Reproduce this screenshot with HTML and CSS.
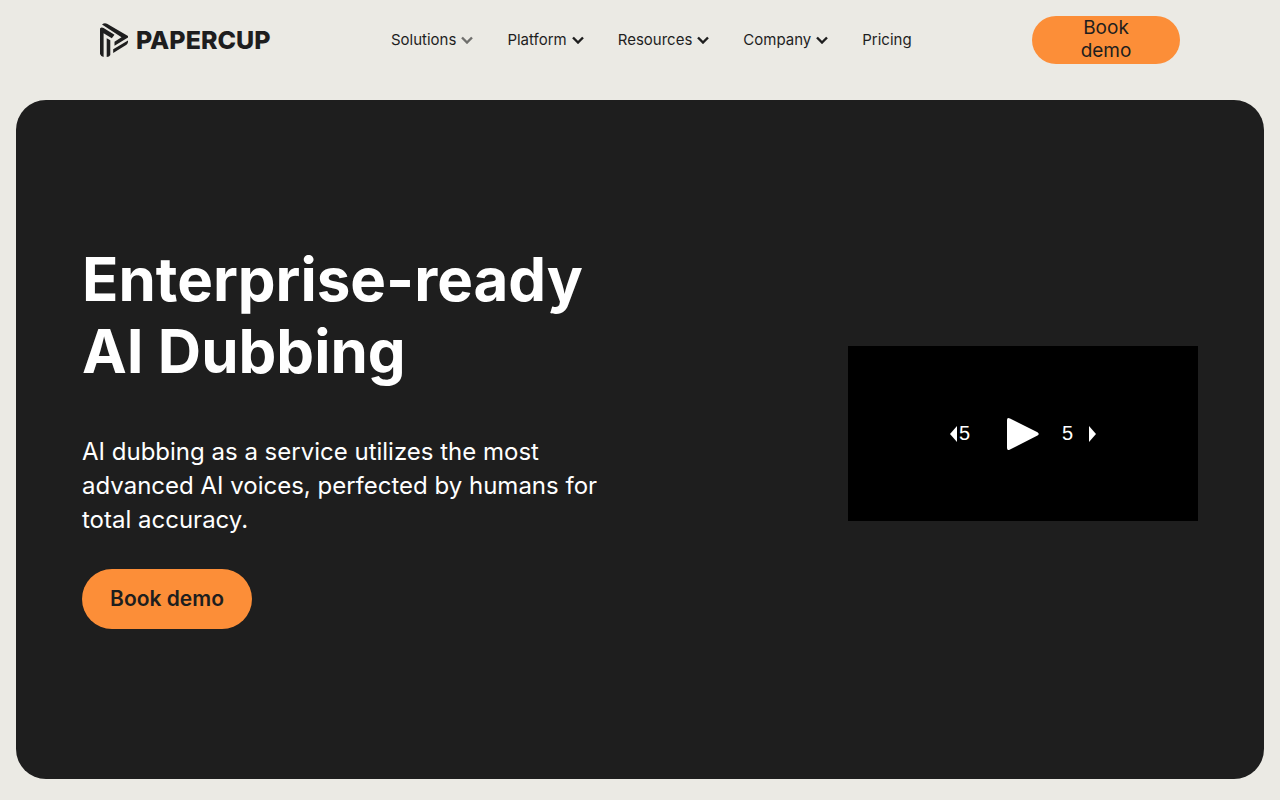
FILE: index.html
```
<!DOCTYPE html>
<html lang="en">
<head>
  <meta charset="UTF-8">
  <title>Papercup</title>
  <meta name="viewport" content="width=device-width, initial-scale=1.0">
  <link rel="stylesheet" href="styles.css">
</head>
<body>
  <header class="header">
    <a class="logo" href="#" aria-label="Papercup home">
      <svg class="logo-mark" viewBox="0 0 28 34" fill="currentColor">
        <path d="M2 1.500 Q4.500 -0.500 7 0.800 L28 13 V14.600 L14.500 22.800 V18.800 L21.500 14.200 Z" />
        <path d="M0 5.500 Q1.500 3.600 3.600 5 L14.500 11.800 L11.800 15.300 L3.600 10.300 V34 Q0.800 33.500 0 31 Z" />
        <path d="M6.700 15.200 L10.300 17.200 V32 Q9.500 33.800 6.700 34 Z" />
        <path d="M13.200 26.200 L28 17.600 Q28.300 20.400 26.500 21.800 L13.200 30 Z" />
      </svg>
      <span class="logo-text">PAPERCUP</span>
    </a>
    <nav class="nav">
      <a class="nav-link" href="#">Solutions
        <svg class="chevron chevron-open" viewBox="0 0 12 8"><path d="M1 1.5 L6 6.5 L11 1.5" /></svg>
      </a>
      <a class="nav-link" href="#">Platform
        <svg class="chevron" viewBox="0 0 12 8"><path d="M1 1.5 L6 6.5 L11 1.5" /></svg>
      </a>
      <a class="nav-link" href="#">Resources
        <svg class="chevron" viewBox="0 0 12 8"><path d="M1 1.5 L6 6.5 L11 1.5" /></svg>
      </a>
      <a class="nav-link" href="#">Company
        <svg class="chevron" viewBox="0 0 12 8"><path d="M1 1.5 L6 6.5 L11 1.5" /></svg>
      </a>
      <a class="nav-link" href="#">Pricing</a>
    </nav>
    <button class="btn btn-small" type="button">Book demo</button>
  </header>

  <main class="hero">
    <div class="hero-text">
      <h1>Enterprise-ready<br>AI Dubbing</h1>
      <p>AI dubbing as a service utilizes the most advanced AI voices, perfected by humans for total accuracy.</p>
      <button class="btn btn-large" type="button">Book demo</button>
    </div>
    <div class="player">
      <button class="skip" type="button" aria-label="Back 5 seconds">
        <svg class="arrow" viewBox="0 0 7 16"><path d="M7 0 V16 L0 8 Z" /></svg>
        <span>5</span>
      </button>
      <button class="play" type="button" aria-label="Play">
        <svg viewBox="0 0 32 32"><path d="M0 2 Q0 -1 3 0.5 L30.500 14.200 Q33 16 30.500 17.600 L3 31.500 Q0 33 0 30 Z" /></svg>
      </button>
      <button class="skip skip-forward" type="button" aria-label="Forward 5 seconds">
        <span>5</span>
        <svg class="arrow" viewBox="0 0 7 16"><path d="M0 0 V16 L7 8 Z" /></svg>
      </button>
    </div>
  </main>
</body>
</html>
```

FILE: styles.css
```
* {
  box-sizing: border-box;
}
body {
  margin: 0;
  background: #ebeae4;
  color: #1e1e1e;
  font-family: Inter, "Liberation Sans", sans-serif;
}
a {
  color: inherit;
  text-decoration: none;
}
button {
  border: none;
  padding: 0;
  font-family: inherit;
  cursor: pointer;
}

/* Header */
.header {
  display: flex;
  align-items: center;
  justify-content: space-between;
  padding: 16px 100px;
}
.logo {
  display: flex;
  align-items: center;
  gap: 8px;
}
.logo-mark {
  width: 28px;
  height: 34px;
}
.logo-text {
  font-size: 25px;
  line-height: 24px;
  font-weight: 800;
}
.nav {
  display: flex;
  gap: 34px;
}
.nav-link {
  display: flex;
  align-items: center;
  gap: 5px;
  font-size: 15px;
  line-height: 20px;
}
.chevron {
  width: 12px;
  height: 8px;
  fill: none;
  stroke: currentColor;
  stroke-width: 2.4;
}
.chevron-open {
  opacity: 0.6;
}
.btn {
  background: #fc8e38;
  color: #1e1e1e;
  border-radius: 30px;
}
.btn-small {
  width: 148px;
  height: 48px;
  padding: 0 40px 2px;
  font-size: 19px;
  line-height: 23px;
}
.btn-large {
  width: 170px;
  height: 60px;
  padding-bottom: 2px;
  font-size: 21px;
  font-weight: 600;
}

/* Hero */
.hero {
  display: flex;
  align-items: center;
  justify-content: space-between;
  min-height: calc(100vh - 121px);
  margin: 20px 16px 21px;
  padding: 0 66px 12px;
  border-radius: 30px;
  background: #1e1e1e;
  color: #fff;
}
.hero-text {
  max-width: 540px;
  padding-top: 5px;
}
.hero h1 {
  margin: 0 0 48px;
  font-size: 60px;
  line-height: 72px;
  font-weight: 700;
}
.hero p {
  margin: 0 0 32px;
  font-size: 24px;
  line-height: 34px;
}

/* Video player */
.player {
  display: flex;
  align-items: center;
  justify-content: center;
  gap: 21px;
  width: 350px;
  aspect-ratio: 2 / 1;
  background: #000;
}
.player button {
  background: none;
  color: #fff;
}
.player svg {
  display: block;
  fill: currentColor;
}
.skip {
  display: flex;
  align-items: center;
  gap: 2px;
  width: 36px;
  font-family: "Liberation Sans", sans-serif;
  font-size: 20px;
}
.skip-forward {
  justify-content: flex-end;
  gap: 16px;
}
.arrow {
  width: 7px;
  height: 16px;
}
.play svg {
  width: 32px;
  height: 32px;
}
```
